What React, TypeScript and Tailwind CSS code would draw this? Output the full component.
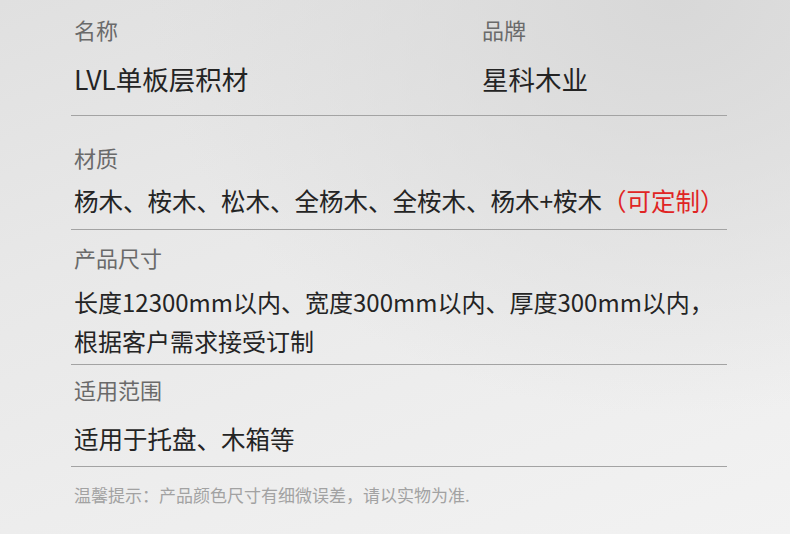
const FONT = "font-['Noto_Sans_CJK_SC','Noto_Sans',sans-serif]"

function Label({ children }: { children: React.ReactNode }) {
  return <p className="text-[22px] leading-[30px] text-[#6a6a6a]">{children}</p>
}

export default function App() {
  return (
    <div
      className={`${FONT} h-[534px] w-full overflow-hidden bg-[radial-gradient(ellipse_at_85%_0%,#d8d8d8_0%,rgba(216,216,216,0)_55%),linear-gradient(160deg,#e0e0e0_0%,#e8e8e8_35%,#ededed_65%,#f2f2f2_100%)]`}
    >
      <div className="ml-[71px] w-[656px]">
        {/* 名称 / 品牌 */}
        <div className="flex border-b border-[#a3a3a3] pt-[14px] pb-[16px]">
          <div className="w-[411px] pl-[3px]">
            <Label>名称</Label>
            <p className="mt-[14px] text-[26.5px] leading-[41px] text-[#242424]">LVL单板层积材</p>
          </div>
          <div className="flex-1">
            <Label>品牌</Label>
            <p className="mt-[14px] text-[26.5px] leading-[41px] text-[#242424]">星科木业</p>
          </div>
        </div>

        {/* 材质 */}
        <div className="border-b border-[#a3a3a3] pt-[26px] pb-[8px] pl-[3px]">
          <Label>材质</Label>
          <p className="mt-[9px] whitespace-nowrap text-[24.5px] leading-[40px] text-[#242424]">
            杨木、桉木、松木、全杨木、全桉木、杨木+桉木
            <span className="text-[#e02424]">（可定制）</span>
          </p>
        </div>

        {/* 产品尺寸 */}
        <div className="border-b border-[#a3a3a3] pt-[12px] pb-[4px] pl-[3px]">
          <Label>产品尺寸</Label>
          <p className="mt-[10px] whitespace-nowrap text-[24px] leading-[39px] text-[#242424]">
            长度12300mm以内、宽度300mm以内、厚度300mm以内，
            <br />
            根据客户需求接受订制
          </p>
        </div>

        {/* 适用范围 */}
        <div className="border-b border-[#a3a3a3] pt-[9px] pb-[7px] pl-[3px]">
          <Label>适用范围</Label>
          <p className="mt-[15px] text-[24.5px] leading-[40px] text-[#242424]">适用于托盘、木箱等</p>
        </div>

        <p className="pt-[16px] pl-[3px] text-[17px] leading-[24px] text-[#a2a2a2]">
          温馨提示：产品颜色尺寸有细微误差，请以实物为准.
        </p>
      </div>
    </div>
  )
}
